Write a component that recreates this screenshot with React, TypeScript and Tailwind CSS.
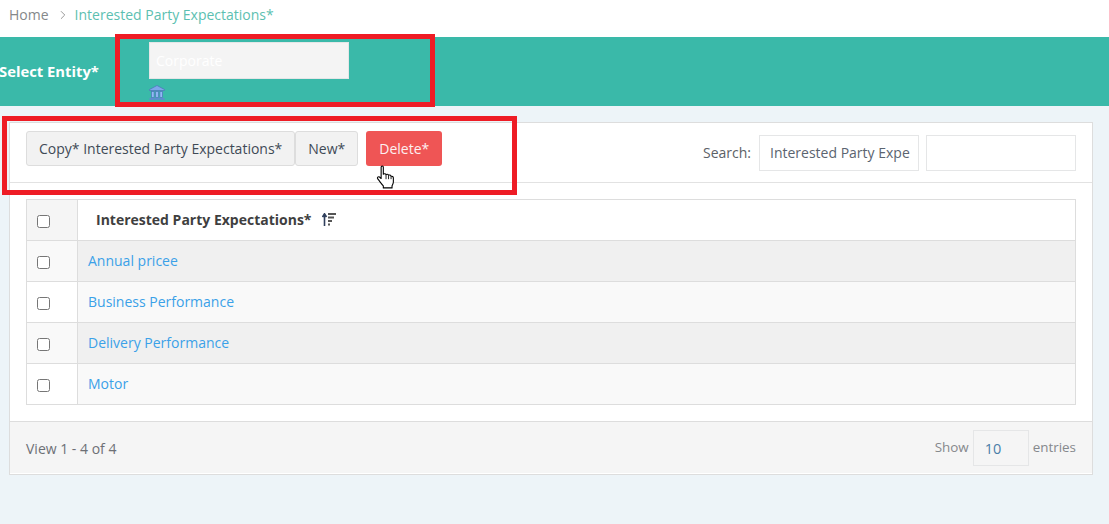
import { ChevronRight } from "lucide-react";

const rows = ["Annual pricee", "Business Performance", "Delivery Performance", "Motor"];

// little bank glyph under the entity box
const BankIcon = () => (
  <svg width="16" height="15" viewBox="0 0 16 15" className="block">
    <path d="M8 0.5 L15.5 4.5 V5.5 H0.5 V4.5 Z" fill="#7ea6ea" stroke="#4a76b8" strokeWidth="0.7" />
    <rect x="2.5" y="6.5" width="2.6" height="6" fill="#93b8f5" stroke="#4a76b8" strokeWidth="0.7" />
    <rect x="6.7" y="6.5" width="2.6" height="6" fill="#93b8f5" stroke="#4a76b8" strokeWidth="0.7" />
    <rect x="10.9" y="6.5" width="2.6" height="6" fill="#93b8f5" stroke="#4a76b8" strokeWidth="0.7" />
    <rect x="0.5" y="13" width="15" height="1.8" fill="#5f8bd0" />
  </svg>
);

const SortIcon = () => (
  <svg width="14" height="13" viewBox="0 0 14 13" className="block">
    <path d="M2.5 13 V2 M0.5 4 L2.5 0.8 L4.5 4" fill="none" stroke="#2f3f5c" strokeWidth="1.6" />
    <path d="M6 1 H14 M6 4.5 H12 M6 8 H10 M6 11.5 H8" fill="none" stroke="#555" strokeWidth="1.8" />
  </svg>
);

const HandCursor = () => (
  <svg width="19" height="24" viewBox="0 0 17 22" className="block">
    <path
      d="M4.5 1.8 C4.5 0.6 6.5 0.6 6.5 1.8 V8.5 C7 7.8 8.6 7.8 9 8.8 C9.5 8.2 11 8.3 11.3 9.4 C12 8.9 13.4 9.2 13.6 10.4 C14.6 10 15.7 10.6 15.7 12 V15.5 C15.7 17 15 18 14.5 19 V21 H6.5 V19.2 C5 17.5 3.2 15 1.4 12.8 C0.5 11.6 1.8 10.2 3 11 L4.5 12.4 Z"
      fill="#fff"
      stroke="#000"
      strokeWidth="1"
      strokeLinejoin="round"
    />
    <path d="M9 9 V13 M11.3 9.6 V13 M13.6 10.6 V13" fill="none" stroke="#000" strokeWidth="0.8" />
  </svg>
);

export default function App() {
  return (
    <div className="relative h-[524px] w-[1109px] overflow-hidden bg-[#edf4f8] font-['Open_Sans',sans-serif] text-[14px] text-[#676a6c]">
      {/* Breadcrumb */}
      <div className="flex h-[37px] items-start bg-white pl-[9px] pt-[5px]">
        <span className="leading-[19px] text-[#85888a]">Home</span>
        <ChevronRight size={14} strokeWidth={1.5} className="ml-[7px] mr-[5px] mt-[3px] text-[#8a8a8a]" />
        <span className="leading-[19px] text-[#5cbfb1]">Interested Party Expectations*</span>
      </div>

      {/* Entity bar */}
      <div className="flex h-[69px] bg-[#3ab9a9]">
        <div className="-ml-px w-[150px] pt-6 text-[14.8px] font-bold leading-[20px] text-white">Select Entity*</div>
        <div className="pt-[5px]">
          <div className="h-[37px] w-[200px] border border-[#e5e6e7] bg-[#f4f4f4] pl-[6px] text-[14px] leading-[36px] text-white">
            Corporate
          </div>
          <div className="mt-[6px]">
            <BankIcon />
          </div>
        </div>
      </div>

      {/* Card */}
      <div className="mx-[9px] mt-4 h-[353px] w-[1084px] border border-[#dddddd] bg-white">
        <div className="flex h-[60px] justify-between border-b border-[#e2e2e2] pl-4 pr-4">
          <div className="flex items-start pt-2">
            <button className="h-[35px] rounded-[3px] border border-[#dddddd] bg-[#f2f2f2] px-3 text-[#3f4a56]">
              Copy* Interested Party Expectations*
            </button>
            <button className="h-[35px] rounded-[3px] border border-[#dddddd] bg-[#f2f2f2] px-3 text-[#3f4a56]">
              New*
            </button>
            <button className="ml-2 h-[35px] w-[76px] rounded-[3px] bg-[#ef5555] text-[#fdf0f0]">Delete*</button>
          </div>
          <div className="flex items-start pt-3">
            <span className="mr-2 leading-[36px] text-[#5c6166]">Search:</span>
            <div className="h-9 w-40 overflow-hidden whitespace-nowrap border border-[#e5e6e7] pl-[10px] pr-[9px] leading-[34px] text-[#5b6470]">
              Interested Party Expe
            </div>
            <div className="ml-[7px] h-9 w-[150px] border border-[#e5e6e7] bg-white" />
          </div>
        </div>

        {/* Table */}
        <div className="mx-4 mt-4 w-[1050px] border border-[#dddddd]">
          <div className="flex h-[41px] border-b border-[#dddddd]">
            <div className="flex w-[51px] items-center border-r border-[#dddddd] bg-[#f5f5f5] pl-[10px] pt-[2px]">
              <input type="checkbox" className="h-[13px] w-[13px]" />
            </div>
            <div className="flex flex-1 items-center bg-white pb-px pl-[18px] font-bold leading-5 text-[#3f3f3f]">
              Interested Party Expectations*
              <span className="ml-[10px]">
                <SortIcon />
              </span>
            </div>
          </div>
          {rows.map((r, i) => (
            <div key={r} className={i < rows.length - 1 ? "flex h-[41px] border-b border-[#dddddd]" : "flex h-[40px]"}>
              <div
                className={`flex w-[51px] items-center border-r border-[#dddddd] pl-[10px] pt-[2px] ${
                  i % 2 === 0 ? "bg-[#f9f9f9]" : "bg-white"
                }`}
              >
                <input type="checkbox" className="h-[13px] w-[13px]" />
              </div>
              <div className={`flex flex-1 items-center pb-px pl-[10px] ${i % 2 === 0 ? "bg-[#f0f0f0]" : "bg-[#f9f9f9]"}`}>
                <a className="text-[#3ba1e8]">{r}</a>
              </div>
            </div>
          ))}
        </div>

        {/* Footer */}
        <div className="mt-4 flex h-[52px] items-start justify-between border-t border-[#dddddd] bg-[#f5f5f5] px-4">
          <span className="mt-[17px] leading-5 text-[#6d7075]">View 1 - 4 of 4</span>
          <div className="flex items-start pt-2 text-[13.4px]">
            <span className="mt-[7px] leading-5 text-[#85888c]">Show</span>
            <div className="ml-[4px] h-9 w-[56px] border border-[#e5e6e7] pl-[11px] text-[14.5px] leading-[36px] text-[#4a7ea8]">10</div>
            <span className="ml-[4px] mt-[7px] leading-5 text-[#85888c]">entries</span>
          </div>
        </div>
      </div>

      {/* Annotation boxes drawn over the screenshot */}
      <div className="pointer-events-none absolute left-[115px] top-[34px] h-[73px] w-[320px] border-[5px] border-[#ee1c25]" />
      <div className="pointer-events-none absolute left-[2px] top-[116px] h-[79px] w-[515px] border-[5px] border-[#ee1c25]" />
      <div className="pointer-events-none absolute left-[376px] top-[165px]">
        <HandCursor />
      </div>
    </div>
  );
}
